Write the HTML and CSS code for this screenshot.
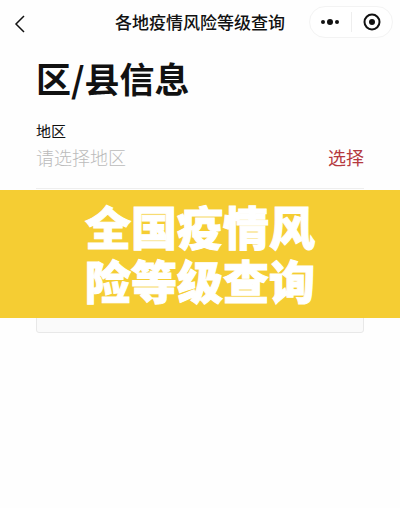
FILE: index.html
```html
<!DOCTYPE html>
<html lang="zh-CN">
<head>
    <meta charset="UTF-8">
    <meta name="viewport" content="width=device-width, initial-scale=1.0">
    <title>各地疫情风险等级查询</title>
    <link rel="stylesheet" href="styles.css">
</head>
<body>
    <header class="navbar">
        <button class="back" type="button" aria-label="返回">
            <svg width="12" height="18" viewBox="0 0 12 18"><path d="M10 1 L2 9 L10 17" fill="none" stroke="#111" stroke-width="1.5"/></svg>
        </button>
        <span class="navbar-title">各地疫情风险等级查询</span>
        <div class="capsule">
            <button type="button" aria-label="更多">
                <svg width="20" height="20" viewBox="0 0 20 20"><circle cx="3" cy="10" r="2"/><circle cx="10" cy="10" r="3"/><circle cx="17" cy="10" r="2"/></svg>
            </button>
            <button type="button" aria-label="关闭">
                <svg width="20" height="20" viewBox="0 0 20 20"><circle cx="10" cy="10" r="7.5" fill="none" stroke="#111" stroke-width="2"/><circle cx="10" cy="10" r="3"/></svg>
            </button>
        </div>
    </header>

    <main class="content">
        <h1>区/县信息</h1>
        <form class="region-form">
            <label for="region">地区</label>
            <div class="region-row">
                <input id="region" type="text" placeholder="请选择地区" readonly>
                <button class="choose" type="button">选择</button>
            </div>
        </form>
        <div class="result-box"></div>
    </main>

    <!-- Banner over the page -->
    <div class="banner">
        <p>全国疫情风险等级查询</p>
    </div>
</body>
</html>
```
FILE: styles.css
```css
* {
    box-sizing: border-box;
}

body {
    position: relative;
    min-height: 100vh;
    margin: 0;
    background: #fefefe;
    color: #111;
    font-family: "Noto Sans CJK SC", sans-serif;
}

button {
    display: flex;
    align-items: center;
    justify-content: center;
    padding: 0;
    border: 0;
    background: none;
    font-family: inherit;
    cursor: pointer;
}

.navbar {
    display: grid;
    grid-template-columns: 84px 1fr 84px;
    align-items: center;
    height: 44px;
    padding: 0 7px;
}

.back {
    width: 26px;
    height: 32px;
}

.back svg {
    margin-top: 4px;
}

.navbar-title {
    font-size: 17px;
    font-weight: 500;
    line-height: 24px;
    text-align: center;
    white-space: nowrap;
}

.capsule {
    display: flex;
    align-items: center;
    height: 32px;
    border: 1px solid #f3f3f3;
    border-radius: 16px;
    background: #fff;
}

.capsule button {
    flex: 1;
    height: 20px;
}

.capsule button + button {
    border-left: 1px solid #eee;
}

.capsule svg {
    fill: #111;
}

.content {
    padding: 12px 36px;
}

h1 {
    margin: 0 0 20px;
    font-size: 35px;
    font-weight: 700;
    line-height: 44px;
}

.region-form {
    border-bottom: 1px solid #eee;
}

.region-form label {
    display: block;
    font-size: 15px;
    line-height: 22px;
}

.region-row {
    display: flex;
    align-items: center;
    height: 46px;
    padding-bottom: 16px;
}

.region-row input {
    flex: 1;
    min-width: 0;
    padding: 0;
    border: 0;
    outline: 0;
    background: none;
    font-family: inherit;
    font-size: 18px;
    font-weight: 300;
}

.region-row input::placeholder {
    color: #bbb;
}

.choose {
    color: #b5393f;
    font-size: 18px;
}

.result-box {
    height: 124px;
    margin-top: 20px;
    border: 1px solid #e8e8e8;
    border-radius: 3px;
    background: #fafafa;
}

.banner {
    position: absolute;
    top: 50%;
    left: 0;
    right: 0;
    padding: 8px 84px 12px;
    background: #f5cd33;
    transform: translateY(-50%);
}

.banner p {
    margin: 0;
    color: #fff;
    font-size: 46px;
    font-weight: 900;
    line-height: 54px;
    text-align: center;
    -webkit-text-stroke: 1px #fff;
}
```
